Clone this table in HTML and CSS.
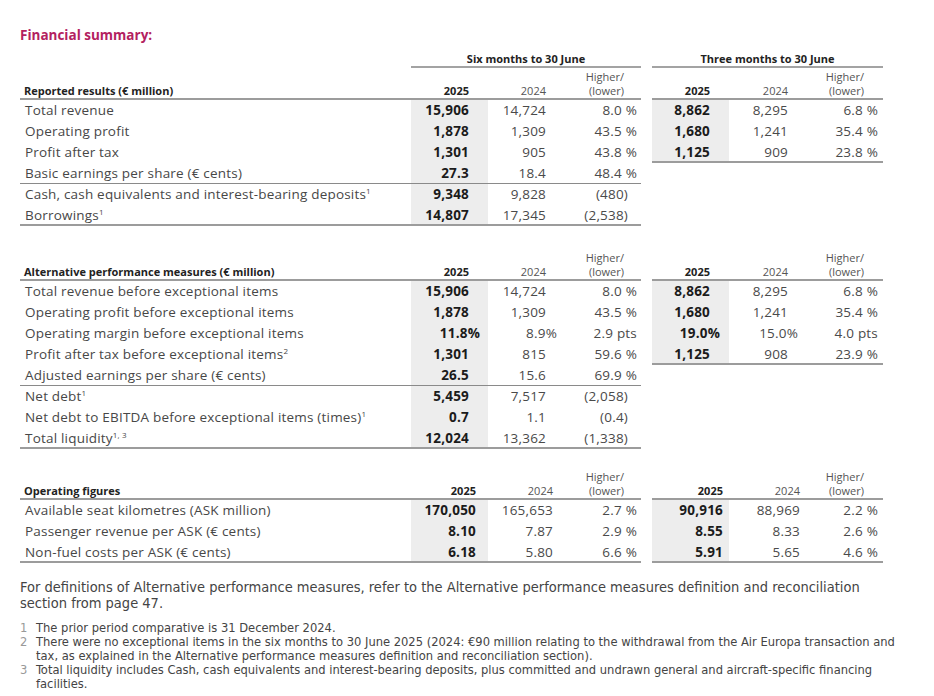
FILE: index.html
```html
<!DOCTYPE html>
<html lang="en">
<head>
<meta charset="utf-8">
<title>Financial summary</title>
<link rel="stylesheet" href="styles.css">
</head>
<body>
<div class="page">
  <h1 class="title">Financial summary:</h1>

  <table class="fin s1">
    <colgroup>
      <col class="c-label"><col class="c-n"><col class="c-n"><col class="c-h"><col class="c-gap"><col class="c-n"><col class="c-n"><col class="c-n">
    </colgroup>
    <tr class="period">
      <td></td>
      <td colspan="3" class="ph">Six months to 30 June</td>
      <td class="gap"></td>
      <td colspan="3" class="ph">Three months to 30 June</td>
    </tr>
    <tr class="head">
      <td class="lab">Reported results (€ million)</td>
      <td class="y25">2025</td><td class="y24">2024</td><td class="hl">Higher/<br>(lower)</td>
      <td class="gap"></td>
      <td class="y25 t">2025</td><td class="y24 t">2024</td><td class="hl t">Higher/<br>(lower)</td>
    </tr>
    <tr>
      <td class="row">Total revenue</td>
      <td class="v b">15,906</td><td class="v">14,724</td><td class="p">8.0 %</td>
      <td class="gap"></td>
      <td class="v b t">8,862</td><td class="v t t24">8,295</td><td class="p t">6.8 %</td>
    </tr>
    <tr>
      <td class="row">Operating profit</td>
      <td class="v b">1,878</td><td class="v">1,309</td><td class="p">43.5 %</td>
      <td class="gap"></td>
      <td class="v b t">1,680</td><td class="v t t24">1,241</td><td class="p t">35.4 %</td>
    </tr>
    <tr>
      <td class="row">Profit after tax</td>
      <td class="v b">1,301</td><td class="v">905</td><td class="p">43.8 %</td>
      <td class="gap"></td>
      <td class="v b t end">1,125</td><td class="v t t24 end">909</td><td class="p t end">23.8 %</td>
    </tr>
    <tr class="sep">
      <td class="row">Basic earnings per share (€ cents)</td>
      <td class="v b">27.3</td><td class="v">18.4</td><td class="p">48.4 %</td>
      <td class="gap"></td><td class="blank"></td><td class="blank"></td><td class="blank"></td>
    </tr>
    <tr>
      <td class="row">Cash, cash equivalents and interest-bearing deposits<sup>1</sup></td>
      <td class="v b">9,348</td><td class="v">9,828</td><td class="p par">(480)</td>
      <td class="gap"></td><td class="blank"></td><td class="blank"></td><td class="blank"></td>
    </tr>
    <tr class="last">
      <td class="row">Borrowings<sup>1</sup></td>
      <td class="v b">14,807</td><td class="v">17,345</td><td class="p par">(2,538)</td>
      <td class="gap"></td><td class="blank"></td><td class="blank"></td><td class="blank"></td>
    </tr>
  </table>

  <table class="fin s2">
    <colgroup>
      <col class="c-label"><col class="c-n"><col class="c-n"><col class="c-h"><col class="c-gap"><col class="c-n"><col class="c-n"><col class="c-n">
    </colgroup>
    <tr class="head">
      <td class="lab">Alternative performance measures (€ million)</td>
      <td class="y25">2025</td><td class="y24">2024</td><td class="hl">Higher/<br>(lower)</td>
      <td class="gap"></td>
      <td class="y25 t">2025</td><td class="y24 t">2024</td><td class="hl t">Higher/<br>(lower)</td>
    </tr>
    <tr>
      <td class="row">Total revenue before exceptional items</td>
      <td class="v b">15,906</td><td class="v">14,724</td><td class="p">8.0 %</td>
      <td class="gap"></td>
      <td class="v b t">8,862</td><td class="v t t24">8,295</td><td class="p t">6.8 %</td>
    </tr>
    <tr>
      <td class="row">Operating profit before exceptional items</td>
      <td class="v b">1,878</td><td class="v">1,309</td><td class="p">43.5 %</td>
      <td class="gap"></td>
      <td class="v b t">1,680</td><td class="v t t24">1,241</td><td class="p t">35.4 %</td>
    </tr>
    <tr>
      <td class="row">Operating margin before exceptional items</td>
      <td class="v b pc">11.8%</td><td class="v pc">8.9%</td><td class="p">2.9 pts</td>
      <td class="gap"></td>
      <td class="v b t pc">19.0%</td><td class="v t t24 pc">15.0%</td><td class="p t">4.0 pts</td>
    </tr>
    <tr>
      <td class="row">Profit after tax before exceptional items<sup>2</sup></td>
      <td class="v b">1,301</td><td class="v">815</td><td class="p">59.6 %</td>
      <td class="gap"></td>
      <td class="v b t end">1,125</td><td class="v t t24 end">908</td><td class="p t end">23.9 %</td>
    </tr>
    <tr class="sep">
      <td class="row">Adjusted earnings per share (€ cents)</td>
      <td class="v b">26.5</td><td class="v">15.6</td><td class="p">69.9 %</td>
      <td class="gap"></td><td class="blank"></td><td class="blank"></td><td class="blank"></td>
    </tr>
    <tr>
      <td class="row">Net debt<sup>1</sup></td>
      <td class="v b">5,459</td><td class="v">7,517</td><td class="p par">(2,058)</td>
      <td class="gap"></td><td class="blank"></td><td class="blank"></td><td class="blank"></td>
    </tr>
    <tr>
      <td class="row">Net debt to EBITDA before exceptional items (times)<sup>1</sup></td>
      <td class="v b">0.7</td><td class="v">1.1</td><td class="p par">(0.4)</td>
      <td class="gap"></td><td class="blank"></td><td class="blank"></td><td class="blank"></td>
    </tr>
    <tr class="last">
      <td class="row">Total liquidity<sup>1, 3</sup></td>
      <td class="v b">12,024</td><td class="v">13,362</td><td class="p par">(1,338)</td>
      <td class="gap"></td><td class="blank"></td><td class="blank"></td><td class="blank"></td>
    </tr>
  </table>

  <table class="fin s3">
    <colgroup>
      <col class="c-label"><col class="c-n"><col class="c-n"><col class="c-h"><col class="c-gap"><col class="c-n"><col class="c-n"><col class="c-n">
    </colgroup>
    <tr class="head">
      <td class="lab">Operating figures</td>
      <td class="y25">2025</td><td class="y24">2024</td><td class="hl">Higher/<br>(lower)</td>
      <td class="gap"></td>
      <td class="y25 t">2025</td><td class="y24 t">2024</td><td class="hl t">Higher/<br>(lower)</td>
    </tr>
    <tr>
      <td class="row">Available seat kilometres (ASK million)</td>
      <td class="v b">170,050</td><td class="v">165,653</td><td class="p">2.7 %</td>
      <td class="gap"></td>
      <td class="v b t">90,916</td><td class="v t t24">88,969</td><td class="p t">2.2 %</td>
    </tr>
    <tr>
      <td class="row">Passenger revenue per ASK (€ cents)</td>
      <td class="v b">8.10</td><td class="v">7.87</td><td class="p">2.9 %</td>
      <td class="gap"></td>
      <td class="v b t">8.55</td><td class="v t t24">8.33</td><td class="p t">2.6 %</td>
    </tr>
    <tr class="last">
      <td class="row">Non-fuel costs per ASK (€ cents)</td>
      <td class="v b">6.18</td><td class="v">5.80</td><td class="p">6.6 %</td>
      <td class="gap"></td>
      <td class="v b t">5.91</td><td class="v t t24">5.65</td><td class="p t">4.6 %</td>
    </tr>
  </table>

  <p class="note">For definitions of Alternative performance measures, refer to the Alternative performance measures definition and reconciliation section from page 47.</p>

  <ol class="footnotes">
    <li><span class="fnum">1</span><span class="ftext">The prior period comparative is 31 December 2024.</span></li>
    <li><span class="fnum">2</span><span class="ftext">There were no exceptional items in the six months to 30 June 2025 (2024: €90 million relating to the withdrawal from the Air Europa transaction and tax, as explained in the Alternative performance measures definition and reconciliation section).</span></li>
    <li><span class="fnum">3</span><span class="ftext">Total liquidity includes Cash, cash equivalents and interest-bearing deposits, plus committed and undrawn general and aircraft-specific financing facilities.</span></li>
  </ol>
</div>
</body>
</html>
```

FILE: styles.css
```css
* { box-sizing: border-box; }

body {
  margin: 0;
  background: #ffffff;
  font-family: "Open Sans", "DejaVu Sans", sans-serif;
  color: #3d3d3d;
}

.page {
  padding: 27px 0 0 20px;
  width: 934px;
}

.title {
  margin: 0;
  font-size: 13.5px;
  line-height: 16px;
  font-weight: 700;
  color: #b3215f;
}

.fin {
  border-collapse: separate;
  border-spacing: 0;
  table-layout: fixed;
  width: 863px;
}

.fin td {
  padding: 0;
  white-space: nowrap;
}

.c-label { width: 391px; }
.c-n { width: 77px; }
.c-h { width: 76px; }
.c-gap { width: 11px; }

.s1 { margin-top: 7px; }
.s2 { margin-top: 23px; }
.s3 { margin-top: 19px; }

/* period header */
.fin .period td { height: 18px; line-height: 16px; vertical-align: top; padding-top: 1px; }
.fin td.ph {
  text-align: center;
  font-size: 11px;
  font-weight: 700;
  color: #222;
  box-shadow: inset 0 -2px #a3a3a3;
}

/* column header */
.fin .head td {
  height: 32px;
  vertical-align: bottom;
  font-size: 11px;
  line-height: 14px;
  padding-bottom: 2px;
  box-shadow: inset 0 -2px #9c9c9c;
}
.fin .head td.gap { box-shadow: none; }
.fin .head td.lab { font-weight: 700; color: #222; padding-left: 4px; }
.fin .head td.y25 { font-weight: 700; color: #222; text-align: right; padding-right: 19px; }
.fin .head td.y24 { text-align: right; padding-right: 19px; color: #555; }
.fin .head td.hl { text-align: right; padding-right: 17px; color: #555; }
.fin .head td.y25.t { padding-right: 19px; }
.fin .head td.y24.t { padding-right: 18px; }
.fin .head td.hl.t { padding-right: 19px; }

/* data rows */
.fin tr:not(.head):not(.period) td {
  height: 21px;
  line-height: 21px;
  font-size: 13.5px;
  letter-spacing: 0.2px;
}
.fin td.row { padding-left: 5px; color: #474747; }
.fin td.v { text-align: right; padding-right: 19px; color: #4a4a4a; }
.fin td.v.t24 { padding-right: 18px; }
.fin td.v.b { font-weight: 700; color: #1b1b1b; background: #ededed; }
.fin td.p { text-align: right; padding-right: 4px; color: #4a4a4a; }
.fin td.p.t { padding-right: 5px; }
.fin td.p.par { padding-right: 13px; }
.fin td.v.pc { padding-right: 8px; }
.fin td.v.t.pc { padding-right: 9px; }
.fin td.v.t24.pc { padding-right: 8px; }

.fin td.end { box-shadow: inset 0 -2px #9c9c9c; }
.fin tr.sep td { box-shadow: inset 0 -1px #8a8a8a; }
.fin tr.last td { box-shadow: inset 0 -2px #9c9c9c; }
.fin tr td.gap,
.fin tr td.blank { box-shadow: none; background: none; }

/* operating figures column alignment */
.s3 .head td.y25, .s3 .head td.y24 { padding-right: 12px; }
.s3 .head td.y25.t, .s3 .head td.y24.t { padding-right: 6px; }
.s3 td.v { padding-right: 12px; }
.s3 td.v.t, .s3 td.v.t24 { padding-right: 6px; }

sup {
  font-size: 8px;
  line-height: 0;
  vertical-align: 5px;
}

.note {
  margin: 16px 0 0 0;
  width: 870px;
  font-family: "Liberation Sans Narrow", "DejaVu Sans Condensed", "Liberation Sans", sans-serif;
  font-size: 14.5px;
  line-height: 16px;
  color: #444;
}

.footnotes {
  list-style: none;
  margin: 10px 0 0 0;
  padding: 0;
  width: 880px;
  font-family: "Liberation Sans Narrow", "DejaVu Sans Condensed", "Liberation Sans", sans-serif;
  font-size: 12.8px;
  line-height: 14px;
  color: #444;
}
.footnotes li {
  display: flex;
}
.fnum {
  flex: 0 0 16px;
  color: #999;
}
.ftext { flex: 1; }
```
